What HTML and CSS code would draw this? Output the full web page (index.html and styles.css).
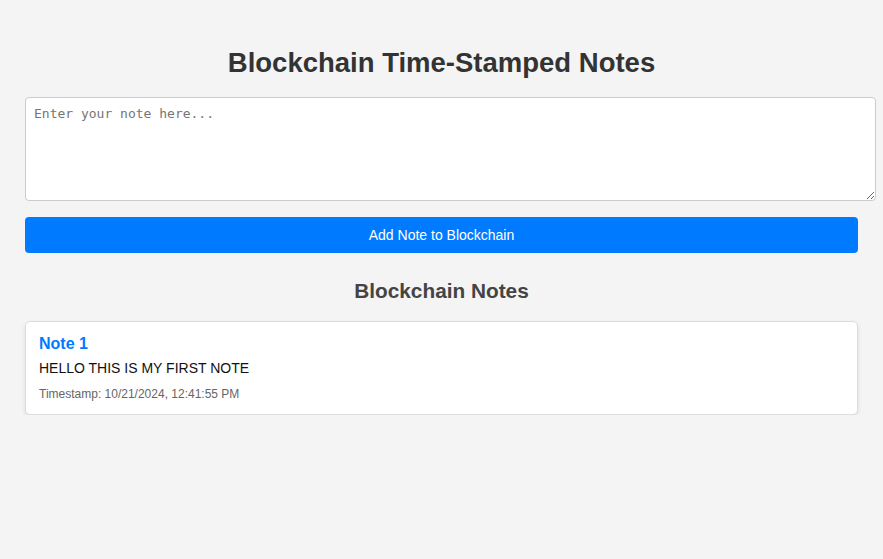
FILE: index.html
```html
<!DOCTYPE html>
<html lang="en">
<head>
<meta charset="utf-8">
<title>Blockchain Time-Stamped Notes</title>
<link rel="stylesheet" href="styles.css">
</head>
<body>
<div class="page">
  <h1 class="title">Blockchain Time-Stamped Notes</h1>
  <textarea class="note-input" placeholder="Enter your note here..."></textarea>
  <button class="add-btn">Add Note to Blockchain</button>
  <h2 class="section-title">Blockchain Notes</h2>
  <div class="notes">
    <div class="note-card">
      <h3 class="note-title">Note 1</h3>
      <p class="note-text">HELLO THIS IS MY FIRST NOTE</p>
      <p class="note-time">Timestamp: 10/21/2024, 12:41:55 PM</p>
    </div>
  </div>
</div>
</body>
</html>
```
FILE: styles.css
```css
html, body {
  margin: 0;
  padding: 0;
  background: #f4f4f4;
}
body {
  font-family: "Liberation Sans", Arial, sans-serif;
  color: #333;
}
.page {
  padding: 47px 25px 0;
}
.title {
  margin: 0 0 18px;
  font-size: 27.5px;
  line-height: 32px;
  font-weight: bold;
  text-align: center;
  color: #333;
}
.note-input {
  display: block;
  width: 100%;
  height: 86px;
  box-sizing: content-box;
  padding: 8px;
  margin: 0 0 16px;
  border: 1px solid #ccc;
  border-radius: 4px;
  background: #fff;
  font-family: "DejaVu Sans Mono", monospace;
  font-size: 13px;
  color: #333;
  resize: both;
}
.note-input::placeholder {
  color: #757575;
}
.add-btn {
  display: block;
  width: 100%;
  padding: 10px;
  border: none;
  border-radius: 4px;
  background: #007bff;
  color: #fff;
  font-family: "Liberation Sans", Arial, sans-serif;
  font-size: 14px;
  line-height: 16px;
  cursor: pointer;
}
.section-title {
  margin: 26px 0 19px;
  font-size: 20.8px;
  line-height: 23px;
  font-weight: bold;
  text-align: center;
  color: #444;
}
.note-card {
  background: #fff;
  border: 1px solid #ddd;
  border-radius: 5px;
  padding: 13px 13px 13px;
  box-shadow: 0 2px 4px rgba(0, 0, 0, 0.1);
}
.note-title {
  margin: 0 0 7px;
  font-size: 16px;
  font-weight: bold;
  color: #007bff;
}
.note-text {
  margin: 0 0 11px;
  font-size: 14px;
  color: #111;
}
.note-time {
  margin: 0;
  font-size: 12px;
  color: #666;
}
```
